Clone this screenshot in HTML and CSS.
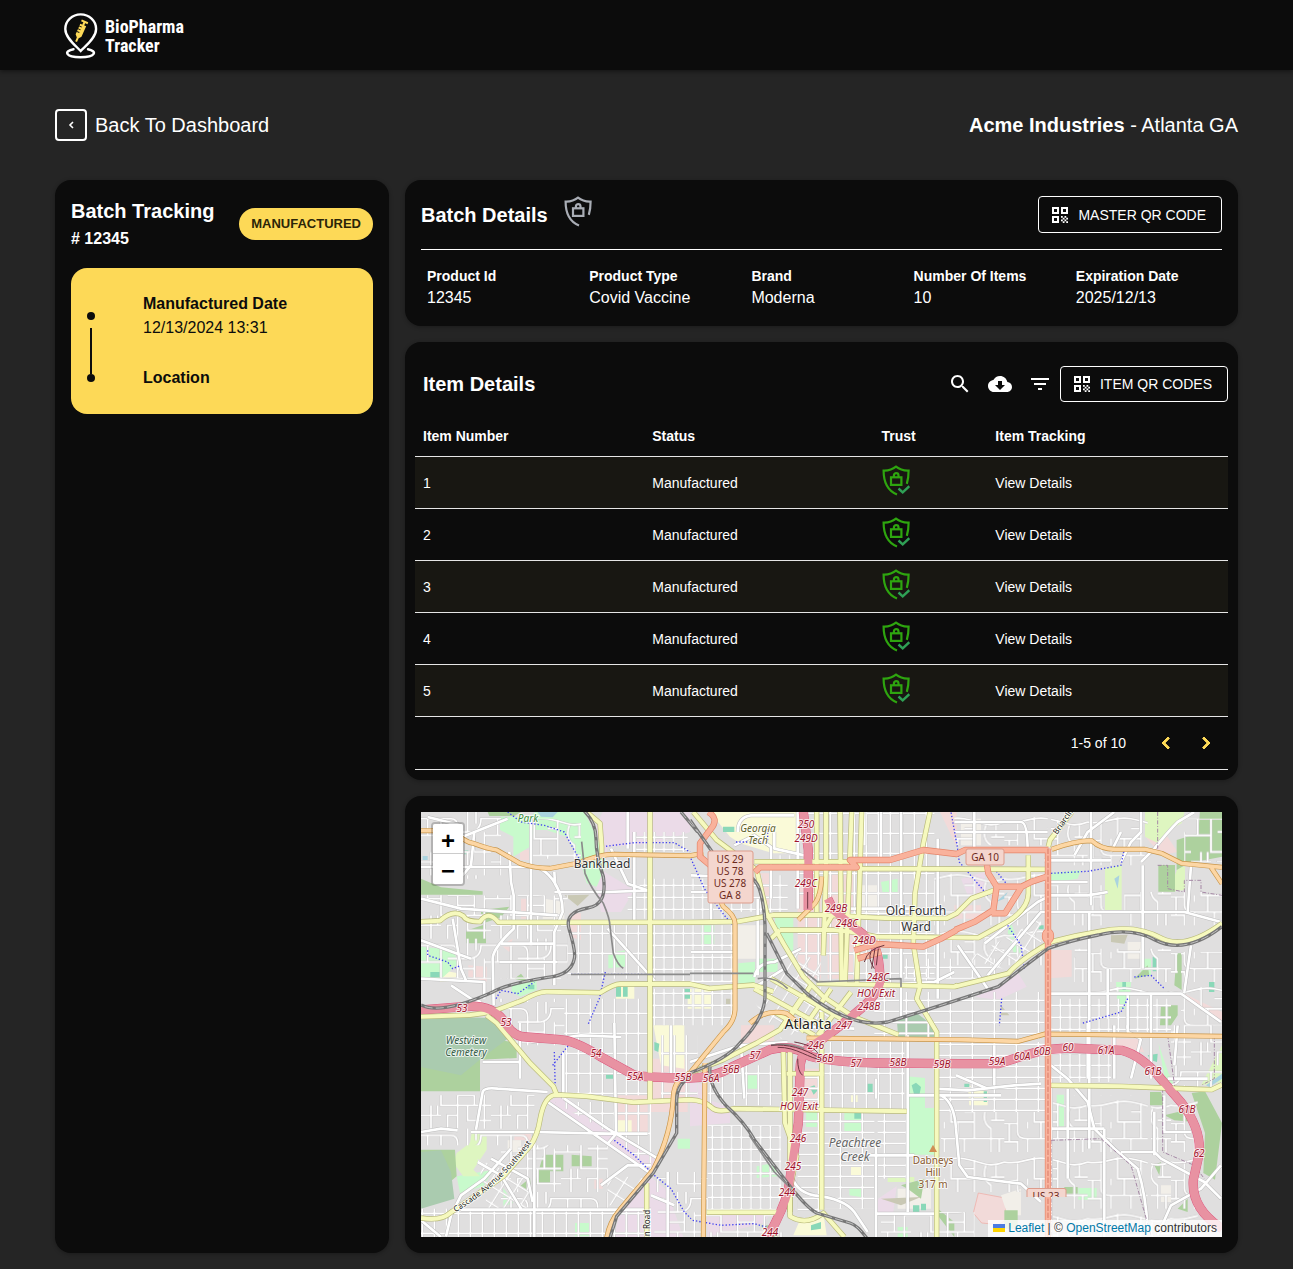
FILE: index.html
```html
<!DOCTYPE html>
<html lang="en">
<head>
<meta charset="utf-8">
<meta name="viewport" content="width=device-width, initial-scale=1">
<title>BioPharma Tracker</title>
<link rel="stylesheet" href="styles.css">
</head>
<body>
<svg class="sprite" aria-hidden="true">
  <symbol id="shield" viewBox="0 0 28 31">
    <g fill="none" stroke="currentColor" stroke-width="2.200">
      <path d="M15 29.500C6 26 1.600 18 1.600 5.600C6.500 5.800 10.500 4.500 14 1.700C17.500 4.500 21.500 5.800 26.600 5.600C26.600 10 26.200 14.500 24.800 18.800"/>
      <rect x="9" y="12.300" width="10.400" height="7.600"/>
      <path d="M11.900 12.300v-1.800a2.300 2.300 0 0 1 4.600 0v1.800"/>
    </g>
  </symbol>
  <symbol id="shield-check" viewBox="0 0 28 31">
    <use href="#shield" width="28" height="31"/>
    <path d="M16.500 23.500L20.700 27.400L27.300 21.200" fill="none" stroke="#2fa055" stroke-width="2.400"/>
  </symbol>
  <symbol id="qr" viewBox="0 0 24 24">
    <path fill="currentColor" fill-rule="evenodd" d="M4 4h7v7H4zM6 6v3h3V6zM13 4h7v7h-7zM15 6v3h3V6zM4 13h7v7H4zM6 15v3h3v-3z"/>
    <path fill="currentColor" d="M13 13h1.750v1.750H13zM16.500 13h1.750v1.750H16.500zM14.750 14.750h1.750v1.750h-1.750zM18.250 14.750H20v1.750h-1.750zM13 16.500h1.750v1.750H13zM16.500 16.500h1.750v1.750H16.500zM14.750 18.250h1.750V20h-1.750zM18.250 18.250H20V20h-1.750z"/>
  </symbol>
</svg>

<header class="topbar">
  <a class="brand" href="#">
    <svg class="brand-pin" viewBox="0 0 34 46" aria-hidden="true">
      <g fill="none" stroke="#fff" stroke-width="2.400" stroke-linecap="round">
        <path d="M16.700 38C12 33 1.300 25 1.300 16A15.400 14.600 0 0 1 32.100 16C32.100 25 21.500 33 16.700 38z"/>
        <path d="M9.500 36.300C-.5 38 1 44.200 16.500 44.200S33.500 38 24 36.300"/>
      </g>
      <g fill="#fdd957" transform="translate(16.800 17.500) rotate(24)">
        <path d="M-3.200-6h6.400V5.500L1.200 8V12h-2V8l-2.400-2.500zM-1-9h2v3h-2zM-3.500-10.500h7v2h-7z"/>
        <path d="M-3.500-3.500h3M-3.500-.5h3M-3.500 2.500h3" stroke="#0c0c0c"/>
      </g>
    </svg>
    <span class="brand-name">BioPharma<br>Tracker</span>
  </a>
</header>

<main class="page">
  <div class="page-head">
    <a class="back" href="#"><span class="back-box"><svg viewBox="0 0 8 10" width="8" height="10" aria-hidden="true"><path d="M6 2L3 5L6 8" fill="none" stroke="#fff" stroke-width="1.600"/></svg></span>Back To Dashboard</a>
    <div class="company"><strong>Acme Industries</strong> - Atlanta GA</div>
  </div>

  <div class="layout">
    <aside class="card tracking">
      <div class="tracking-head">
        <div>
          <h1 class="title">Batch Tracking</h1>
          <p class="batch-no"># 12345</p>
        </div>
        <span class="chip">MANUFACTURED</span>
      </div>
      <div class="timeline">
        <div class="rail" aria-hidden="true"><i class="dot"></i><i class="stem"></i><i class="dot"></i></div>
        <dl class="events">
          <div><dt>Manufactured Date</dt><dd>12/13/2024 13:31</dd></div>
          <div><dt>Location</dt></div>
        </dl>
      </div>
    </aside>

    <div class="column">
      <section class="card batch">
        <div class="batch-head">
          <h2 class="title">Batch Details</h2>
          <svg class="shield shield-muted" aria-hidden="true"><use href="#shield"/></svg>
          <button class="btn" type="button"><svg class="qr" aria-hidden="true"><use href="#qr"/></svg>MASTER QR CODE</button>
        </div>
        <dl class="facts">
          <div><dt>Product Id</dt><dd>12345</dd></div>
          <div><dt>Product Type</dt><dd>Covid Vaccine</dd></div>
          <div><dt>Brand</dt><dd>Moderna</dd></div>
          <div><dt>Number Of Items</dt><dd>10</dd></div>
          <div><dt>Expiration Date</dt><dd>2025/12/13</dd></div>
        </dl>
      </section>

      <section class="card items">
        <div class="toolbar">
          <h2 class="title">Item Details</h2>
          <button class="icon-btn" type="button" aria-label="Search"><svg viewBox="0 0 24 24"><path d="M15.500 14h-.79l-.28-.27C15.410 12.590 16 11.110 16 9.500 16 5.910 13.090 3 9.500 3S3 5.910 3 9.500 5.910 16 9.500 16c1.610 0 3.090-.59 4.230-1.570l.27.28v.79l5 4.990L20.490 19l-4.990-5zm-6 0C7.010 14 5 11.990 5 9.500S7.010 5 9.500 5 14 7.010 14 9.500 11.990 14 9.500 14z"/></svg></button>
          <button class="icon-btn" type="button" aria-label="Download"><svg viewBox="0 0 24 24"><path d="M19.350 10.040C18.670 6.590 15.640 4 12 4 9.110 4 6.600 5.640 5.350 8.040 2.340 8.360 0 10.910 0 14c0 3.310 2.690 6 6 6h13c2.760 0 5-2.240 5-5 0-2.640-2.050-4.780-4.650-4.960zM17 13l-5 5-5-5h3V9h4v4h3z"/></svg></button>
          <button class="icon-btn" type="button" aria-label="Filter"><svg viewBox="0 0 24 24"><path d="M10 18h4v-2h-4v2zM3 6v2h18V6H3zm3 7h12v-2H6v2z"/></svg></button>
          <button class="btn" type="button"><svg class="qr" aria-hidden="true"><use href="#qr"/></svg>ITEM QR CODES</button>
        </div>
        <table class="grid">
          <thead><tr><th class="c-num">Item Number</th><th class="c-status">Status</th><th class="c-trust">Trust</th><th>Item Tracking</th></tr></thead>
          <tbody>
            <tr><td>1</td><td>Manufactured</td><td><svg class="shield shield-ok" aria-hidden="true"><use href="#shield-check"/></svg></td><td><a href="#">View Details</a></td></tr>
            <tr><td>2</td><td>Manufactured</td><td><svg class="shield shield-ok" aria-hidden="true"><use href="#shield-check"/></svg></td><td><a href="#">View Details</a></td></tr>
            <tr><td>3</td><td>Manufactured</td><td><svg class="shield shield-ok" aria-hidden="true"><use href="#shield-check"/></svg></td><td><a href="#">View Details</a></td></tr>
            <tr><td>4</td><td>Manufactured</td><td><svg class="shield shield-ok" aria-hidden="true"><use href="#shield-check"/></svg></td><td><a href="#">View Details</a></td></tr>
            <tr><td>5</td><td>Manufactured</td><td><svg class="shield shield-ok" aria-hidden="true"><use href="#shield-check"/></svg></td><td><a href="#">View Details</a></td></tr>
          </tbody>
        </table>
        <div class="pager">
          <span class="pager-range">1-5 of 10</span>
          <button class="icon-btn" type="button" aria-label="Previous page"><svg viewBox="0 0 24 24"><path d="M15.410 7.410L14 6l-6 6 6 6 1.410-1.410L10.830 12z"/></svg></button>
          <button class="icon-btn" type="button" aria-label="Next page"><svg viewBox="0 0 24 24"><path d="M10 6L8.590 7.410 13.170 12l-4.580 4.590L10 18l6-6z"/></svg></button>
        </div>
      </section>

      <section class="card map-card">
        <div class="map">
<svg class="map-canvas" viewBox="0 0 801 425" preserveAspectRatio="xMidYMid slice" role="img" aria-label="Map of Atlanta">
<defs>
  <!-- street grids -->
  <path id="sA" d="M4 0V60M0 4H36"/>
  <path id="sB" d="M4 0V33M0 4H66"/>
  <path id="sC" d="M4 0V36M0 4H29"/>
  <path id="sD" d="M4 0V44M0 4H38"/>
  <path id="sI" d="M0 20H90Q110 20 110 45V190M0 70H60V120H210M60 20V70M30 120V190M0 150H60M80 60H140V0M140 60Q180 60 180 20H210M160 60V120M190 60V190M110 90H160M80 190V150H110M140 120V165H210M50 120V150M20 20V70M165 0V35M210 70H190"/>
  <path id="sJ" d="M0 30C60 40 70 10 130 20S200 50 250 30M40 34V110Q40 130 70 130H250M90 16V80H160M160 24V130M0 85H40M70 130V170M70 100V80M110 80V130M195 40Q180 80 210 100V170M130 130V170M0 140H40V170M210 75H250M225 35V75M235 130V170M15 85V140M130 50H160"/>
  <pattern id="gA" width="36" height="60" patternUnits="userSpaceOnUse"><use href="#sA" class="st-edge"/><use href="#sA" class="st"/></pattern>
  <pattern id="gB" width="66" height="33" patternUnits="userSpaceOnUse"><use href="#sB" class="st-edge"/><use href="#sB" class="st"/></pattern>
  <pattern id="gC" width="29" height="36" patternUnits="userSpaceOnUse"><use href="#sC" class="st-edge"/><use href="#sC" class="st"/></pattern>
  <pattern id="gD" width="38" height="44" patternUnits="userSpaceOnUse" patternTransform="rotate(32)"><use href="#sD" class="st-edge"/><use href="#sD" class="st"/></pattern>
  <pattern id="gI" width="210" height="190" patternUnits="userSpaceOnUse"><use href="#sI" class="st-edge"/><use href="#sI" class="st"/></pattern>
  <pattern id="gJ" width="250" height="170" patternUnits="userSpaceOnUse"><use href="#sJ" class="st-edge"/><use href="#sJ" class="st"/></pattern>
  <!-- road centre lines -->
  <g id="minor">
    <path d="M60 40L110 80 260 20M160 60L150 160 125 190M265 120L270 210 278 250V350Q215 410 215 440L218 580M400 180L402 215Q425 250 425 300L400 360V520M0 165H350Q400 190 420 255M0 260L120 290 410 310M20 15L120 40M95 320L120 470 135 505M0 385L95 420 150 440M400 240H560L690 235M570 110L620 215 680 235M560 350L700 505M640 60V330M620 0V110M330 20V400M0 500L190 510V560M90 520L150 560 180 570M240 395H400M235 450H410"/>
    <path d="M150 960H340L560 965H680M165 953L185 840Q190 825 230 830L380 840M0 960L60 950 110 955M297 633V800M340 965V1275M185 750H300M120 1193H690M330 690L480 670 600 675M427 720V860M580 633L585 960M430 860L560 950 720 1045M380 870L560 995 690 1085M560 995L590 960M750 640V800M75 1273L90 1210 120 1150 190 1100 270 1010M0 1225L60 1275M170 1050L240 1090 300 1190M210 1040L320 1100 335 1170M740 1080V1275M690 1150L760 1180M540 1120L620 1060 690 1060"/>
    <path d="M940 100L1000 70 1050 105V260M950 60Q950 15 990 10H1120M1130 0V290M1060 60V110L1150 130M1010 260V490M810 190L940 195M810 240H930M870 190V330M810 420H940M1000 495Q1010 450 1060 450L1140 410M1010 520L1090 470M1660 0V120M1330 0V100M1380 0V140M1440 0V620M1600 480L1540 510 1440 515M1290 290H1480M1550 80V560M1600 60H1880M1600 30H1800Q1820 30 1820 120M1690 395L1850 270 1890 250M1610 400L1700 530M1700 490L1860 300H2290L2400 330M1870 145H2070M2010 0V280M2005 300V1010M2165 160V470M1890 545H2280L2400 630M2290 540L2310 400M2160 150L2200 110Q2240 60 2270 30L2320 0M2100 150L2130 90 2160 60V0M1870 210H2000M1870 250H2000L2060 240M1960 130L2000 60 2080 0M2070 120L2100 60M2300 300L2310 160M2060 470V620M2120 550V650M2190 545V800"/>
    <path d="M807 750L960 700 1100 690M960 700L970 860M1080 640L1300 650M1460 670V1200M1365 800V860M1460 850H1740M1115 1100Q1130 1140 1180 1150Q1270 1160 1300 1200L1340 1260M1365 1275V1000M1340 1030H1480M1560 850Q1600 870 1605 950L1615 1060 1640 1095 1800 1115 1860 1170M1365 1205H1540M1540 830L1640 835 1780 820 1860 815M1605 790L1700 830M1720 700V820M1890 760L1940 800 2000 870 2020 950 2080 1010 2150 1070Q2175 1150 2180 1250M1890 950H2050M1890 800V1275M1940 830V1100M2100 1020L2200 1020 2220 1040 2350 1110 2400 1160M2400 1060L2340 1130 2250 1180 2210 1270M2080 640V800M2160 680L2130 800M2200 900V1030M2270 640L2260 760M2240 800H2360M2230 850V960H2310M2050 950V1275M1920 720H2080M2000 633V800M2120 640V660L2160 680"/>
  </g>
  <g id="secondary">
    <path d="M0 329L57 326Q97 290 127 312Q135 329 177 329Q202 292 232 331H807L947 329 1057 309H1207L1407 319H1577L1607 304 1652 259 1722 234"/>
    <path d="M687 0V868M677 1113V1275M0 614L147 609 187 604 227 594 307 564Q350 539 377 539L537 542Q580 516 597 516H807L867 529 997 519 1057 539"/>
    <path d="M197 610L227 633 327 753 397 823 407 848M0 1218Q60 1228 87 1203L247 1093 327 1003Q350 970 357 923Q370 848 407 848L497 853 637 871 807 863Q850 865 870 885T937 890L1457 898"/>
    <path d="M1187 0V300M1215 0V170L1207 430M1257 0L1262 510M1292 0L1272 520M1322 0L1307 520M1202 600V1193M1000 149H1310M1167 169L1600 171 1877 172M1187 514L1600 524 1610 520"/>
    <path d="M1077 354H1237L1287 359 1367 374 1672 377 1732 344Q1822 300 1822 244V130M1527 0L1507 94 1482 244 1477 394 1497 524 1487 560 1547 660V1275"/>
    <path d="M817 0L887 84 1007 174 1037 304 1087 394 1147 494 1207 554 1297 614 1432 668M1602 524L1762 484Q1800 440 1892 389Q1960 370 2032 359Q2142 335 2222 379Q2292 415 2403 334"/>
    <path d="M1887 820L2102 823 2232 828 2372 833 2403 818M1087 720L1092 933 1127 1033 1107 1130V1213Q1157 1243 1207 1203L1270 1275M857 1201H1067M1097 785H1207M807 783L907 743 1007 693 1077 653 1140 560M1882 104L1887 84 1952 0M497 0L537 34 542 104 542 134"/>
    <path d="M1000 530L1200 640M1050 500L1260 620M1090 640L1170 520M1140 660L1230 530M1190 670L1290 540M1060 600L1180 670M1107 720V1200M1077 354L1050 380M1207 354L1240 300"/>
  </g>
  <g id="primary">
    <path d="M0 56H97Q130 90 157 94Q200 110 227 114L297 154Q340 169 387 169L467 154Q540 127 577 127L687 129 807 131 847 124M877 224L907 284Q942 310 942 334V594Q940 630 907 660L847 733 807 783M852 753L847 1275M987 634Q1030 590 1097 604L1140 640M1157 678L1617 683 1792 688 1872 666 2403 673M1892 112Q1960 86 2012 86Q2040 112 2082 112H2172L2222 124 2282 154 2403 166M2370 166L2403 215M807 783Q760 800 757 853Q752 963 697 1073L597 1193Q565 1230 557 1278M1202 194Q1200 250 1182 274L1132 324"/>
  </g>
  <g id="trunk">
    <path d="M862 0Q895 20 870 50L837 94V134L867 159M1002 180L1017 166H1307L1287 144H1407L1507 114 1607 126 1632 114H1882M1877 194L1832 209 1802 224H1727L1702 184 1697 154M1727 224L1717 294 1662 329 1602 354M1802 224L1752 304H1712M1300 415L1367 396 1507 404 1560 380 1607 354M1310 440L1380 420"/>
    <path d="M1881 110V1275"/><ellipse cx="1881" cy="372" rx="9" ry="14"/>
  </g>
  <g id="motorway">
    <path d="M0 594L127 584Q220 574 257 640Q280 675 317 675L417 683Q460 685 537 733L637 788Q670 797 807 798Q880 798 937 763L1047 713Q1117 695 1167 733Q1237 751 1367 753L1617 755H1732L1802 733 1872 713 1942 708 2102 715Q2162 730 2222 803L2282 873Q2340 950 2335 1023L2317 1103Q2310 1190 2403 1250"/>
    <path d="M1147 0L1162 114V294M1220 260L1237 294 1297 344 1347 384Q1377 410 1377 514Q1365 550 1327 584L1267 634 1220 670 1160 710Q1135 733 1137 783L1132 933 1117 1033 1102 1133Q1087 1193 1040 1275"/>
  </g>
  <g id="railway">
    <path d="M487 -6Q525 30 525 80T547 194Q560 280 500 288Q430 300 444 350Q465 420 460 440Q450 490 380 496Q260 515 217 539Q60 610 0 579"/>
    <path d="M807 24L877 124Q1000 184 1015 230T1032 340V554Q1030 620 957 693Q920 740 807 783M1037 364L1097 484 1157 544Q1290 650 1400 630Q1500 600 1732 524Q1800 470 1882 409Q1950 385 2032 369Q2132 345 2202 384Q2292 430 2403 344"/>
    <path d="M867 763Q860 820 917 883Q970 930 1000 983L1107 1123Q1160 1190 1187 1203L1287 1233Q1310 1240 1337 1278M807 793Q767 820 767 863V963L697 1083 587 1213 567 1278M780 0L830 60"/>
  </g>
</defs>
<rect width="801" height="425" fill="#e0dfdf"/>
<g transform="scale(.333333)">
  <!-- land use -->
  <g fill="#ebdbe8">
    <path d="M545 0H807V60L700 95 560 104 550 180 640 234 600 300 540 300 520 200 470 160ZM382 868L427 848 557 953 707 1043 687 1083 577 1003ZM687 1093L737 1133 787 1275H577L597 1203ZM807 803L857 823V863L927 883V933L807 943ZM857 1208H1047L1027 1233 860 1275ZM1732 524L1792 484 1817 524 1732 564 1662 554ZM1367 1163L1427 1123 1417 1200H1367ZM1620 200L1690 180 1700 250 1640 250Z"/>
  </g>
  <g fill="#f2dad9">
    <path d="M297 114H327V144H297ZM445 304H480V384L445 374ZM142 460L197 464V509L142 494ZM300 260H330V320H300ZM240 400L275 380 265 420ZM1002 184H1052V274L1027 284ZM1557 0H1607V104ZM1887 414H1952V494L1887 499ZM690 740H800V900H690ZM590 850H680V960H590ZM1130 220H1200V500H1130ZM1220 180H1300V500H1220ZM1150 770H1200V880H1150ZM2070 680H2150L2170 720H2070ZM2170 70L2230 60 2270 120 2220 130ZM2280 540L2403 600V630L2290 560ZM960 640H1060V700H960ZM520 1100H545V1130H520ZM280 965H330V985H280ZM1600 280H1680V320H1600Z"/>
    <path d="M1672 1143L1752 1158 1757 1223 1732 1238 1682 1233 1657 1203Z" stroke="#f0a8a0" stroke-width="2"/>
  </g>
  <g fill="#f2efe9"><path d="M370 260L430 270 430 320H365ZM2120 390H2165V440H2120ZM1310 220H1370V300H1310ZM950 340H1030V440H950ZM1430 1130H1530V1190H1430ZM1740 1150L1800 1130 1800 1210H1760ZM1620 20H1680V100H1620ZM2220 1120H2250V1170H2220ZM260 985H300V1020H260Z"/></g>
  <g fill="#fafad8">
    <path d="M867 0H1127V124H1057L957 94 927 74ZM57 474L112 484 97 509H57ZM585 522H640V560H585ZM590 925H632V965H590ZM697 640H790V770L720 760ZM1137 1223L1207 1203 1217 1270H1117ZM1640 820L1700 840V880H1645ZM800 530H870V590H800ZM1290 850H1310V870H1290ZM1290 1065H1320V1095H1290Z"/>
  </g>
  <g fill="#c8facc">
    <path d="M237 14H327L350 -6H487L527 74 557 154 527 224 497 214 477 144 437 74 377 54H340L327 104 277 134V74L237 54ZM0 404L97 414 112 454 57 504 0 494ZM272 514L347 504V534L297 554 272 539ZM562 424L617 414 612 464 562 469ZM107 1093L217 1073 187 1123 117 1143ZM247 1128L277 1173 247 1183ZM462 1233H507V1273H462Z"/>
    <path d="M1457 793L1512 798V888H1542V1028H1457ZM1007 1063L1057 1053 1072 1093 1007 1098ZM1062 314H1117V424H1097L1062 364ZM952 454L1002 449V514H952ZM1880 184L1980 174 1970 200 1890 212ZM2212 693L2242 783 2262 823 2232 803ZM1907 848H1929V943H1907ZM1972 1128H2027V1163H1972ZM1380 210L1430 200 1430 240 1385 245ZM840 340H880V400H840ZM1010 440H1070V480H1010ZM1155 890H1190V945H1155ZM1270 900H1320V960H1270ZM2085 510H2130L2125 590H2090ZM2160 440H2190V490H2160ZM1770 330L1800 420 1780 430 1760 360ZM970 790H1010V830H970ZM1285 1130L1330 1120 1320 1155 1285 1150ZM1430 1245H1460V1275H1430ZM770 980H807V1010H770ZM0 640L10 690 0 700Z"/>
  </g>
  <g fill="#def6c0">
    <path d="M107 1023L147 993 152 963 197 968V1013L157 1073 177 1093 127 1093 97 1053ZM2172 -6H2292L2282 34 2242 54 2212 94 2172 74ZM2052 169L2102 159V294H2052ZM2272 164H2292V234L2242 239ZM2340 820L2403 700V810ZM1400 1095H1480V1110H1400Z"/>
  </g>
  <g fill="#add19e">
    <path d="M200 0H300L280 12 205 12ZM0 200L60 226 185 238V248H0ZM180 294L265 284 240 316 180 336ZM135 356L195 336V394H135ZM0 1013H102L107 1093 0 1183ZM367 1028H427V1078H387V1113H342ZM452 1028L512 1033V1063H452ZM297 1123L327 1098 332 1153ZM2267 84L2332 64 2337 -6H2403V134L2302 154 2267 174ZM2212 159H2262V239H2212ZM2267 424H2282V534L2260 520ZM2312 843L2352 838 2403 933 2382 1103 2347 1083 2352 963ZM2187 840H2220L2230 880H2187ZM2230 910L2310 890 2320 930 2260 925ZM2220 580H2270V610L2250 640H2217ZM2140 500L2180 460 2185 490ZM1930 1125H1970V1145H1930ZM1550 1190L1600 1230V1275L1550 1210ZM1750 1195H1790V1250H1750ZM2200 1060L2220 1050 2215 1090ZM2270 1190L2300 1160V1200ZM1020 1240H1070V1275H1040ZM0 640L287 693V738L177 743V838H0ZM1440 1120L1510 1100 1500 1160 1460 1130ZM280 500L300 485 320 510Z"/>
  </g>
  <path fill="#aacbaf" d="M0 612L215 618 260 680 180 740 120 790 0 765ZM0 1020L60 1015 90 1080 100 1160 0 1190ZM1427 618L1490 605 1547 650V678H1432Z"/>
  <path fill="#c9c8b4" d="M430 250L505 248 470 282ZM1380 1160L1500 1155 1440 1180ZM915 560H940V590L915 580ZM2070 370L2120 368 2110 395 2070 390ZM1740 580L1765 610H1740Z"/>
  <path fill="#8ad8b8" d="M28 480H56V496H28ZM585 524H600V554H585ZM606 524H620V554H606ZM788 530H807V560H788ZM320 518H340V532H320ZM906 44H940V60H906ZM1472 820L1485 812 1500 825 1495 850 1480 850ZM1166 825L1180 820 1190 835 1178 848ZM2195 434H2208V478H2195ZM2104 510H2115V534H2104ZM2364 510H2380V540H2364ZM1630 815H1645V830H1630ZM1688 838H1698V870H1688ZM1300 900H1320V920H1300ZM1337 815H1355V840H1337ZM1476 1180H1495V1200H1476ZM1500 1175H1515V1195H1500ZM1170 1240L1200 1230V1250L1170 1255ZM2180 730L2210 725 2208 750 2190 745ZM555 780H577V800H555ZM700 690L715 695 712 720 700 715ZM130 115H142V127H130ZM1385 420H1400V440H1385ZM1852 340H1868V352H1852Z"/>
  <path fill="#aad3df" d="M350 0H410L395 16 360 14ZM5 132H20V144H5ZM2355 820L2403 785V800L2365 825ZM2080 200L2095 190 2090 230ZM1725 270L1760 240 1750 260Z"/>
  <!-- local streets -->
  <path fill="url(#gI)" d="M0 0H240V200H0ZM0 250H440V500H0ZM200 560H430V700H290ZM0 850H340V1000H0ZM240 1000H560V1190H240Z"/>
  <path fill="url(#gA)" d="M440 340H690V500H440ZM430 560H690V850H430ZM0 1190H690V1275H0ZM400 870H690V1080L560 960Z"/>
  <path fill="url(#gC)" d="M620 200H940V320H620ZM640 60H800V120H640ZM690 340H940V510H690ZM690 530H940V640H690ZM940 190H1100V300H940ZM860 940H1080V1200H860ZM1040 130H1160V160H1040Z"/>
  <path fill="url(#gA)" d="M1130 0H1540V520H1130ZM720 670H830V860H720ZM860 760H1090V880H860ZM1210 690H1450V900H1210Z"/>
  <path fill="url(#gB)" d="M1210 900H1360V1190H1210ZM1370 900H1455V1100H1370ZM1550 690H1880V900H1550ZM1130 780H1200V1200H1130ZM1450 440H1730V500H1450ZM1360 540H1870V680H1360Z"/>
  <path fill="url(#gJ)" d="M1540 180H1880V460H1540ZM1890 0H2180V160H1890ZM1890 220H2050V350H1890ZM1960 410H2270V540H1960ZM1560 900H1880V1140H1560ZM1890 850H2180V1275H1890ZM2190 860H2330V1275H2190ZM2280 420H2403V640H2280ZM1600 0H1880V100H1600ZM2110 240H2403V350H2110ZM330 20H480V140H330Z"/>
  <path fill="url(#gC)" d="M1890 560H2250V660H1890ZM1890 720H2070V810H1890Z"/>
  <path fill="url(#gI)" d="M2250 640H2403V830H2250ZM2290 20H2403V150H2290ZM1380 1200H1660V1275H1380ZM700 1080H860V1275H700ZM860 1210H1090V1275H860Z"/>
  <path fill="url(#gD)" d="M1130 420L1200 450 1190 510 1250 610 1080 680 1000 570 1090 480ZM560 1090L690 1100 620 1180H560ZM170 1040L330 1110 320 1190H200ZM1640 440L1860 320V400L1780 480Z"/>
  <use href="#minor" class="minor-casing"/><use href="#minor" class="minor"/>
  <!-- footways and boundaries -->
  <path class="foot" d="M260 0L300 30 370 40 430 60 457 110 480 150M545 104L640 92 760 92 807 120M20 415V430L80 450 95 470 115 462M225 560L240 535 290 545 340 510M450 487H680M553 480L535 560 500 640M810 140L850 230 910 310 945 350V480M1607 90L1615 150 1700 250M1720 170L1760 220M1890 184L2000 178 2100 160 2110 110M1760 340L1800 400 1810 470M580 985L640 1030 700 1090 750 1130 790 1200 810 1220M400 720L403 840M395 760L450 690M815 1225L900 1240 1000 1235 1045 1248M1742 560L1735 640M2140 495L2190 490 2230 530M2120 560L2100 600 1980 635M1607 94L1590 0M945 90H1040V50"/>
  <path class="bound" d="M2210 160H2240V230L2290 240V205H2340V240L2403 250M2240 670L2262 830M2225 830V1020L2320 1060 2350 1100M1890 985L2040 980 2130 1060 2190 1270M1890 985V1270M2380 670V800L2340 820M2210 0V110"/>
  <use href="#motorway" class="motorway-casing"/><use href="#motorway" class="motorway"/>
  <use href="#secondary" class="secondary-casing"/><use href="#secondary" class="secondary"/>
  <use href="#primary" class="primary-casing"/><use href="#primary" class="primary"/>
  <use href="#motorway" class="motorway"/>
  <use href="#trunk" class="trunk-casing"/><use href="#trunk" class="trunk"/>
  <path d="M1881 110V1275" class="median"/>
  <use href="#railway" class="railway"/><use href="#railway" class="railway-dash"/>
  <path class="siding" d="M482 89L492 184Q510 230 547 274Q567 320 567 344L577 424Q590 460 607 469M450 487H807M807 484H997" />
  <path class="siding" d="M985 970L1060 1080 1110 1130M1010 500Q1060 490 1100 530M1050 700Q1090 690 1150 710M1140 470L1190 510 1440 500V525"/>
  <path class="ramp" d="M1050 700C1100 695 1150 710 1190 735M1070 706C1130 705 1160 740 1210 745M1120 690C1180 700 1190 720 1200 740M1130 740Q1130 780 1145 790M1350 420Q1340 440 1360 470M1362 410L1352 470M1372 410L1366 460M1390 400Q1340 410 1330 450M1160 240V290M1100 1110L1110 1140"/>
  <path fill="#d08f55" d="M1524 1020L1536 998 1548 1020Z"/>
</g>
<!-- place names and road numbers -->
<g class="lbl">
  <text class="park" x="107" y="10">Park</text>
  <text class="place" x="181" y="56">Bankhead</text>
  <g class="campus"><text x="337" y="20">Georgia</text><text x="337" y="32">Tech</text></g>
  <g class="place"><text x="495" y="103">Old Fourth</text><text x="495" y="119">Ward</text></g>
  <text class="city" x="387" y="217">Atlanta</text>
  <g class="park cem"><text x="45" y="232">Westview</text><text x="45" y="244">Cemetery</text></g>
  <g class="creek"><text x="434" y="335">Peachtree</text><text x="434" y="349">Creek</text></g>
  <g class="peak"><text x="512" y="352">Dabneys</text><text x="512" y="364">Hill</text><text x="512" y="376">317 m</text></g>
  <g class="exit">
    <text x="385" y="16">250</text><text x="385" y="30">249D</text><text x="385" y="75">249C</text><text x="415" y="100">249B</text><text x="426" y="115">248C</text><text x="443" y="132">248D</text><text x="457" y="169">248C</text><text x="455" y="185">HOV Exit</text><text x="448" y="198">248B</text><text x="423" y="217">247</text>
    <text x="41" y="200">53</text><text x="85" y="214">53</text><text x="175" y="245">54</text><text x="214" y="268">55A</text><text x="262" y="269">55B</text><text x="290" y="270">56A</text><text x="310" y="261">56B</text><text x="334" y="247">57</text><text x="395" y="237">246</text><text x="404" y="250">56B</text><text x="435" y="255">57</text><text x="477" y="254">58B</text><text x="521" y="256">59B</text><text x="576" y="253">59A</text><text x="601" y="248">60A</text><text x="621" y="243">60B</text><text x="647" y="239">60</text><text x="685" y="242">61A</text><text x="732" y="263">61B</text><text x="766" y="301">61B</text><text x="778" y="345">62</text>
    <text x="379" y="284">247</text><text x="378" y="298">HOV Exit</text><text x="377" y="330">246</text><text x="372" y="358">245</text><text x="366" y="384">244</text><text x="349" y="424">244</text>
  </g>
  <g class="street">
    <path id="cascade" d="M30 403Q83 372 113 327" fill="none" stroke="none"/>
    <text><textPath href="#cascade" startOffset="50%">Cascade Avenue Southwest</textPath></text>
    <text transform="translate(645 10) rotate(-55)">Briarcliff</text>
    <text transform="translate(229 411) rotate(-90)">n Road</text>
  </g>
</g>
<g class="plate">
  <rect x="287" y="39" width="45" height="52" rx="2"/><rect x="545" y="37" width="38" height="16" rx="2"/><path d="M606 385V378Q606 376.500 608 376.500H643Q645 376.500 645 378V385"/>
  <text x="309" y="51">US 29</text><text x="309" y="63">US 78</text><text x="309" y="75">US 278</text><text x="309" y="87">GA 8</text><text x="564" y="49">GA 10</text>
  <svg x="605" y="377" width="41" height="8"><text x="20" y="11">US 23</text></svg>
</g>
</svg>
          <div class="zoom">
            <button type="button" aria-label="Zoom in">+</button>
            <button type="button" aria-label="Zoom out">−</button>
          </div>
          <div class="credit"><a href="#"><svg width="12" height="8" viewBox="0 0 12 8" aria-hidden="true"><path fill="#4C7BE1" d="M0 0h12v4H0z"/><path fill="#FFD500" d="M0 4h12v4H0z"/></svg> Leaflet</a> | © <a href="#">OpenStreetMap</a> contributors</div>
        </div>
      </section>
    </div>
  </div>
</main>
</body>
</html>
```
FILE: styles.css
```css
* { box-sizing: border-box; }

body {
  margin: 0;
  background: #252525;
  color: #fff;
  font-family: "Liberation Sans", Helvetica, Arial, sans-serif;
  font-size: 14px;
}

h1, h2, p, dl, dd { margin: 0; }
a { color: inherit; text-decoration: none; }
button { font-family: inherit; cursor: pointer; }
.sprite { display: none; }

/* Top bar */
.topbar {
  display: flex;
  align-items: center;
  height: 70px;
  padding: 2px 64px 0;
  background: #0c0c0c;
  box-shadow: 0 2px 4px rgba(0, 0, 0, .4);
}
.brand { display: flex; align-items: center; gap: 7px; }
.brand-pin { width: 34px; height: 46px; }
.brand-name {
  font-family: "Roboto Condensed", "Liberation Sans Narrow", Roboto, sans-serif;
  font-size: 18px;
  font-weight: 700;
  line-height: 19px;
}

/* Page frame */
.page { padding: 39px 55px 16px; }
.page-head {
  display: flex;
  justify-content: space-between;
  align-items: center;
  margin-bottom: 39px;
  font-size: 20px;
}
.back { display: flex; align-items: center; gap: 8px; line-height: 30px; }
.company { line-height: 30px; }
.back-box {
  display: grid;
  place-items: center;
  width: 32px;
  height: 32px;
  border: 2px solid #fff;
  border-radius: 4px;
}
.layout {
  display: grid;
  grid-template-columns: minmax(0, 334fr) minmax(0, 833fr);
  gap: 16px;
}
.column { display: flex; flex-direction: column; gap: 16px; min-width: 0; }
.card {
  padding: 16px;
  border-radius: 16px;
  background: #0c0c0c;
  box-shadow: 0 1px 4px rgba(0, 0, 0, .3);
}
.title { font-size: 20px; line-height: 30px; font-weight: 700; }

/* Tracking */
.tracking-head {
  display: flex;
  justify-content: space-between;
  align-items: center;
  margin-bottom: 16px;
}
.batch-no { font-size: 16px; line-height: 26px; font-weight: 700; }
.chip {
  padding: 0 12px;
  border-radius: 16px;
  background: #fdd957;
  color: #2b2508;
  font-size: 13px;
  line-height: 32px;
  font-weight: 700;
}
.timeline {
  display: flex;
  gap: 48px;
  padding: 24px 16px;
  border-radius: 16px;
  background: #fdd957;
  color: #0c0c0c;
}
.rail {
  display: flex;
  flex-direction: column;
  align-items: center;
  padding-top: 20px;
}
.dot { width: 8px; height: 8px; border-radius: 50%; background: #0c0c0c; }
.stem { width: 2px; height: 46px; margin-top: 8px; background: #0c0c0c; }
.events { display: flex; flex-direction: column; gap: 26px; font-size: 16px; line-height: 24px; }
.events dt { font-weight: 700; }

/* Buttons and icons */
.btn {
  display: flex;
  align-items: center;
  gap: 6px;
  height: 36px;
  padding: 0 15px 0 9px;
  border: 1px solid #fff;
  border-radius: 4px;
  background: transparent;
  color: #fff;
  font-size: 14px;
}
.qr { width: 24px; height: 24px; }
.icon-btn {
  display: grid;
  place-items: center;
  width: 40px;
  height: 40px;
  padding: 0;
  border: 0;
  background: transparent;
}
.icon-btn svg { width: 24px; height: 24px; fill: #fff; }
.shield { width: 28px; height: 31px; }
.shield-muted { color: #a9adb5; align-self: flex-start; }
.shield-ok { display: block; margin-bottom: 4px; color: #2ea50f; }

/* Batch details */
.batch-head {
  display: flex;
  align-items: center;
  gap: 16px;
  padding-bottom: 16px;
  border-bottom: 1px solid #fff;
}
.batch-head .btn { height: 37px; margin-left: auto; }
.facts {
  display: grid;
  grid-template-columns: repeat(5, minmax(0, 1fr));
  gap: 16px;
  padding: 16px 0 0 6px;
}
.facts dt { font-size: 14px; line-height: 20px; font-weight: 700; }
.facts dd { font-size: 16px; line-height: 24px; }

/* Item table */
.items { padding: 10px; }
.toolbar { display: flex; align-items: center; height: 64px; padding-left: 8px; }
.toolbar .title { margin-right: auto; }
.grid { width: 100%; border-collapse: separate; border-spacing: 0; table-layout: fixed; }
.grid th, .grid td { padding: 0 8px; border-bottom: 1px solid #e6e6e6; text-align: left; }
.grid th { height: 41px; font-weight: 700; }
.grid td { height: 52px; }
.grid tbody tr:nth-child(odd) { background: #181712; }
.c-num, .c-status { width: 28.2%; }
.c-trust { width: 14%; }
.pager {
  display: flex;
  align-items: center;
  justify-content: flex-end;
  height: 53px;
  padding-right: 2px;
  border-bottom: 1px solid #e6e6e6;
}
.pager-range { margin-right: 20px; }
.pager .icon-btn svg { fill: #fdd957; stroke: #fdd957; }

/* Map */
.map { position: relative; height: 425px; overflow: hidden; }
.map-canvas { display: block; width: 100%; height: 100%; font-family: "Noto Sans", sans-serif; }
.zoom {
  position: absolute;
  top: 10px;
  left: 10px;
  border: 2px solid rgba(0, 0, 0, .2);
  border-radius: 4px;
  background-clip: padding-box;
}
.zoom button {
  display: block;
  width: 30px;
  height: 30px;
  padding: 4px 0 0;
  border: 0;
  background: #fff;
  color: #000;
  font-size: 24px;
  line-height: 26px;
  font-weight: 700;
}
.zoom button:first-child { border-bottom: 1px solid #ccc; border-radius: 2px 2px 0 0; }
.zoom button:last-child { border-radius: 0 0 2px 2px; }
.credit {
  position: absolute;
  right: 0;
  bottom: 0;
  padding: 0 5px;
  background: rgba(255, 255, 255, .8);
  color: #333;
  font-size: 12px;
  line-height: 17px;
}
.credit a { color: #0078a8; }

/* Map roads */
.st, .st-edge { fill: none; stroke: #fff; stroke-width: 5; }
.st-edge { stroke: #c8c6c6; stroke-width: 8; }
.minor, .minor-casing, .secondary, .secondary-casing, .primary, .primary-casing,
.trunk, .trunk-casing, .motorway, .motorway-casing, .railway, .railway-dash,
.foot, .bound, .siding, .ramp, .median { fill: none; stroke-linejoin: round; }
.minor-casing { stroke: #bdbdbd; stroke-width: 11; }
.minor { stroke: #fff; stroke-width: 8; }
.secondary-casing { stroke: #b9ba7c; stroke-width: 16; }
.secondary { stroke: #f6f9be; stroke-width: 12; }
.primary-casing { stroke: #c99548; stroke-width: 15; }
.primary { stroke: #fcd6a4; stroke-width: 11; }
.trunk-casing { stroke: #e58468; stroke-width: 19; }
.trunk { stroke: #f9b29c; stroke-width: 15; }
.median { stroke: #c8614e; stroke-width: 2; stroke-dasharray: 16 5; }
.motorway-casing { stroke: #dd5c80; stroke-width: 28; }
.motorway { stroke: #e892a2; stroke-width: 24; }
.railway { stroke: #777; stroke-width: 10; }
.railway-dash { stroke: #e6e6e6; stroke-width: 2; stroke-dasharray: 24 10; }
.siding { stroke: #8b8b8b; stroke-width: 5; }
.ramp { stroke: #6b3540; stroke-width: 3; }
.foot { stroke: #4343f0; stroke-width: 4; stroke-dasharray: 4 6; }
.bound { stroke: #a588a5; stroke-width: 3; stroke-dasharray: 12 5 3 5; }

/* Map labels */
.lbl text { text-anchor: middle; paint-order: stroke; stroke: rgba(255, 255, 255, .75); stroke-width: 2px; stroke-linejoin: round; }
.park, .campus, .creek, .exit { font-size: 10px; font-style: italic; }
.park { fill: #3c8a3c; }
.cem { fill: #365c48; }
.campus { fill: #62622c; }
.creek { font-size: 12px; fill: #666; }
.place { font-size: 12px; fill: #333; }
.city { font-size: 14px; fill: #222; }
.peak { font-size: 10px; fill: #8a5a30; }
.exit { fill: #a0142c; }
.street { font-size: 8px; fill: #222; }
.plate rect, .plate path { fill: #f4d6ce; stroke: #dd9c8b; }
.plate text { font-size: 10px; fill: #6d2a1c; text-anchor: middle; }
```
